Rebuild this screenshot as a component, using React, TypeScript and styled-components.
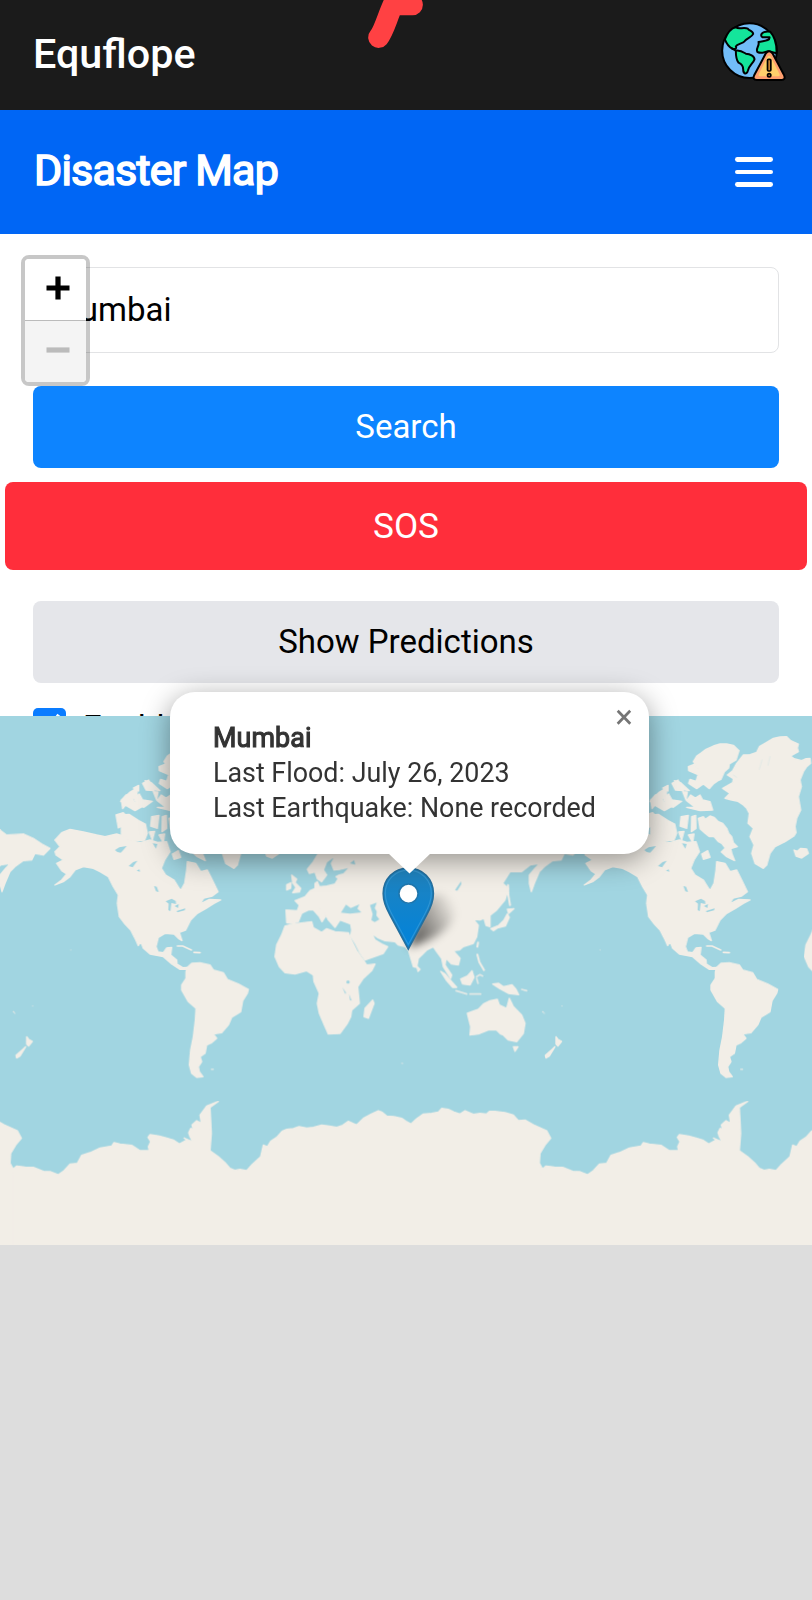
import React from "react";
import styled, { createGlobalStyle } from "styled-components";

const GlobalStyle = createGlobalStyle`
  * { box-sizing: border-box; }
  body { margin: 0; background: #ddd; font-family: Roboto, "Liberation Sans", sans-serif; }
  button, input { font: inherit; }
`;

const Page = styled.div`
  position: relative;
  width: 812px;
  height: 1600px;
  overflow: hidden;
  display: flex;
  flex-direction: column;
  background: #ddd;
`;

const AppBar = styled.header`
  position: relative;
  height: 110px;
  flex: none;
  display: flex;
  justify-content: space-between;
  align-items: flex-start;
  padding: 21px 25px 0 33px;
  background: #1b1b1b;
`;

const AppName = styled.div`
  color: #fff;
  font-size: 41.3px;
  font-weight: 500;
  line-height: 67px;
`;

const PenMark = styled.svg`
  position: absolute;
  left: 360px;
  top: 0;
`;

const TitleBar = styled.div`
  height: 124px;
  flex: none;
  display: flex;
  justify-content: space-between;
  align-items: center;
  padding: 0 39px 0 33px;
  background: #0066f5;
`;

const Title = styled.h1`
  margin: 0;
  color: #fff;
  font-size: 43px;
  font-weight: 400;
  letter-spacing: -0.8px;
  -webkit-text-stroke: 1.6px #fff;
  line-height: 60px;
  padding: 0 0 5px 1px;
`;

const MenuButton = styled.button`
  display: flex;
  flex-direction: column;
  gap: 7.7px;
  padding: 0;
  border: 0;
  background: none;
`;

const MenuLine = styled.span`
  width: 38px;
  height: 4.8px;
  border-radius: 2.4px;
  background: #fff;
`;

const Controls = styled.section`
  height: 482px;
  flex: none;
  overflow: hidden;
  padding: 33px 33px 0;
  background: #fff;
  display: flex;
  flex-direction: column;
  font-size: 33px;
`;

const SearchInput = styled.input`
  height: 86px;
  flex: none;
  padding: 0 17px 2px;
  border: 1px solid #e2e3e5;
  border-radius: 8px;
  color: #000;
  background: #fff;
  outline: none;
`;

const ActionButton = styled.button<{ $bg: string; $fg: string; $top: number; $height: number; $bleed?: number; $size?: number }>`
  height: ${(p) => p.$height}px;
  flex: none;
  margin: ${(p) => p.$top}px -${(p) => p.$bleed ?? 0}px 0;
  padding: 0 0 ${(p) => (p.$size ? 0 : 2)}px;
  border: 0;
  border-radius: 8px;
  background: ${(p) => p.$bg};
  color: ${(p) => p.$fg};
  font-size: ${(p) => p.$size ?? 33}px;
`;

const CheckRow = styled.label`
  margin-top: 25px;
  display: flex;
  align-items: flex-start;
  gap: 17px;
  line-height: 40px;
  color: #000;
`;

const CheckBox = styled.span`
  width: 33px;
  height: 33px;
  border-radius: 5px;
  background: #0a7cff;
`;

const MapView = styled.section`
  position: relative;
  height: 529px;
  flex: none;
  background: #a1d5e1;
`;

const MapDrawing = styled.svg`
  display: block;
  width: 812px;
  height: 529px;
`;

const ZoomControl = styled.div`
  position: absolute;
  left: 21px;
  top: 255px;
  width: 69px;
  height: 131px;
  display: flex;
  flex-direction: column;
  border: 4px solid rgba(0, 0, 0, 0.22);
  border-radius: 8px;
  background-clip: padding-box;
`;

const ZoomButton = styled.button<{ $off?: boolean }>`
  flex: 1;
  display: flex;
  align-items: center;
  justify-content: center;
  padding: 0 0 4px 4px;
  border: 0;
  border-bottom: ${(p) => (p.$off ? "0" : "1px solid #bbb")};
  border-radius: ${(p) => (p.$off ? "0 0 4px 4px" : "4px 4px 0 0")};
  background: ${(p) => (p.$off ? "#f4f4f4" : "#fff")};
  color: ${(p) => (p.$off ? "#bbb" : "#000")};
`;

const Marker = styled.svg`
  position: absolute;
  left: 382px;
  top: 867px;
  overflow: visible;
`;

const Popup = styled.div`
  position: absolute;
  left: 170px;
  top: 692px;
  width: 479px;
  height: 161.5px;
  padding: 29px 0 0 43px;
  border-radius: 25px;
  background: #fff;
  box-shadow: 0 6px 29px rgba(0, 0, 0, 0.4);
  color: #333;
  font-size: 26.85px;
  line-height: 35px;
  white-space: nowrap;
`;

const PlaceName = styled.div`
  -webkit-text-stroke: 1.1px #333;
  letter-spacing: 0.1px;
`;

const PopupTip = styled.div`
  position: absolute;
  left: 218px;
  top: 161px;
  width: 43px;
  height: 20.5px;
  background: #fff;
  clip-path: polygon(0 0, 100% 0, 50% 100%);
`;

const PopupClose = styled.button`
  position: absolute;
  right: 8px;
  top: 8px;
  width: 34px;
  height: 34px;
  padding: 0;
  border: 0;
  background: none;
  color: #757575;
  font-size: 33px;
  line-height: 34px;
  text-align: center;
`;

const GlobeAlert = () => (
  <svg width="67" height="61" viewBox="243 63 200 183" strokeLinejoin="round" strokeLinecap="round">
    <circle cx="331" cy="152" r="82" fill="#72bdf8" stroke="#000" strokeWidth="6" />
    <g fill="#14e59b" stroke="#000" strokeWidth="6">
      <path d="M257 118C266 96 278 84 290 82C300 90 312 80 326 86C330 93 342 92 342 102C338 112 322 114 316 124C310 131 294 131 290 139C294 146 286 150 278 145C268 140 262 130 257 118Z" />
      <path d="M290 152C304 150 312 156 320 161C332 162 346 168 346 178C342 190 330 196 326 212C322 226 312 222 312 208C312 198 308 192 298 188C292 180 290 164 290 152Z" />
      <path d="M393 95C380 92 366 98 366 106C366 116 380 110 391 112C392 124 374 122 358 126C362 136 348 148 355 156C368 162 376 156 388 154L412 160C413 134 408 112 393 95Z" />
    </g>
    <path d="M278 145L290 152" stroke="#000" strokeWidth="6" />
    <path d="M380 160Q390 148 400 160L435 226Q440 239 427 240H353Q339 239 345 226Z" fill="#ff9f6e" stroke="#000" strokeWidth="6" />
    <path d="M385 170Q390 164 395 170L421 222Q424 229 417 229H363Q356 229 359 222Z" fill="#ffd06b" />
    <rect x="385" y="178" width="10" height="35" rx="3" fill="#c98232" stroke="#000" strokeWidth="5" />
    <circle cx="390" cy="226" r="5" fill="#c98232" stroke="#000" strokeWidth="5" />
  </svg>
);

const WORLD_WIDTH = 1588;

const World = () => (
  <g id="world" fill="#f2eee7" stroke="#f2eee7" strokeWidth="4" strokeLinejoin="round" strokeLinecap="round">
    {/* North America */}
    <path d="M165 455L180 440 165 420 185 398 210 388 250 396 290 405 315 410 350 402 375 410 390 422 420 428 450 420 472 427 500 425 510 455 494 480 484 505 497 525 522 540 542 572 554 550 560 510 562 485 587 490 602 515 622 510 637 540 654 575 637 588 612 594 600 612 628 598 662 600 642 610 617 626 592 640 572 660 557 690 538 697 546 722 535 715 522 702 495 700 475 712 468 740 474 756 490 758 500 744 515 742 512 765 530 780 531 792 548 803 562 802 560 808 540 808 515 792 490 770 450 762 430 745 422 725 415 737 405 715 392 690 375 672 358 650 352 610 355 585 340 560 325 530 300 515 280 505 250 500 225 510 210 530 190 545 165 555 185 540 200 522 185 512 170 490 190 480 168 465Z" />
    <g fill="#a1d5e1" stroke="none">
      <path d="M345 450L358 442 380 438 370 450 362 458 352 456ZM386 498L400 486 412 482 398 502ZM462 558L470 560 476 576 468 574ZM497 604L515 596 527 603 528 612 514 609 511 634 505 630 506 611ZM524 618L536 612 534 624ZM530 633L556 625 554 631 532 637Z" />
      <path d="M458 430L472 432 468 446ZM410 512L418 508 420 515Z" />
    </g>
    {/* Caribbean */}
    <path d="M532 738L548 738 574 750M582 757L600 758" fill="none" strokeWidth="5" />
    {/* Arctic islands, Greenland and Iceland */}
    <path d="M348 345L370 338 388 358 375 372 355 384ZM362 304L378 285 396 290 402 306 430 318 405 332 380 318ZM400 264L416 256 416 273ZM435 242L454 248 480 272 454 268Z" />
    <g transform="translate(32 0)">
      <path d="M460 185L470 168 482 160 498 148 520 138 540 132 560 132 580 136 597 152 588 180 568 192 566 204 553 215 543 238 534 242 520 252 508 266 490 252 470 266 446 250 450 238 468 244 474 224 446 212 445 200 462 193 478 212Z" />
      <path d="M440 322L465 322 440 302 452 285 466 294 480 285 488 300 510 305 518 330 480 332ZM332 300L356 278 382 262 378 286 354 304 336 326ZM370 295L386 282 396 300 425 304 400 322 378 314ZM396 250L414 240 430 272 406 270ZM428 275L442 276 438 300ZM332 345L355 343 384 362 404 372 410 400 402 420 362 424 332 404ZM423 350L445 346 440 385 420 378ZM455 350L467 346 468 385 454 395ZM416 396L432 394 425 420ZM445 405L462 402 458 428ZM475 355L490 350 496 358 510 348 522 352 535 365 548 370 560 385 566 400 575 410 580 428 592 440 572 446 576 462 584 482 560 470 544 456 556 444 545 430 534 424 522 410 508 410 495 400 480 386ZM485 462L503 452 510 472 490 478Z" />
      <path d="M548 265L578 248 580 236 562 225 578 212 590 190 610 165 630 164 650 157 658 140 675 130 700 115 720 111 740 110 752 122 775 132 772 144 775 155 752 168 762 176 785 182 798 176 810 175 812 190 800 200 790 215 780 240 784 260 775 290 782 330 770 355 765 380 768 398 762 408 735 425 705 440 690 460 680 495 670 505 645 490 635 460 642 435 630 410 640 385 624 370 628 340 620 325 610 315 594 304 575 300 555 295 570 280ZM762 450L772 454 782 445 800 447 805 460 785 474 768 468Z" />
    </g>
    <path d="M612 225L622 232M698 180L690 208M722 170L716 196" stroke="#dde8e5" strokeWidth="2" />
    {/* South America, New Zealand and Antarctica */}
    <g transform="translate(0 720)">
      <path d="M562 82L575 70 600 68 630 75 640 90 670 98 682 118 715 132 745 148 742 160 728 182 722 215 695 232 685 255 665 278 640 282 650 295 635 308 620 315 615 340 600 350 605 365 595 380 598 395 609 410 590 412 575 400 568 375 572 330 580 290 586 240 588 205 565 185 545 150 545 135 558 115 558 95Z" />
      <path d="M80 290L86 298 97 304 86 318 80 312ZM77 320L60 348 50 354 48 346 66 330Z" />
      <path d="M634 388h6" strokeOpacity="0.7" />
      <path d="M212 30h1M97 198h2M40 215h1" strokeOpacity="0.4" />
    </g>
    <path d="M38 1408L50 1398 75 1401 100 1402 130 1414 152 1415 175 1424 192 1412 210 1392 232 1390 245 1366 270 1358 300 1344 335 1338 342 1328 360 1332 395 1336 420 1352 448 1352 445 1340 452 1325 444 1312 450 1304 478 1308 500 1314 520 1320 538 1332 560 1320 552 1314 578 1325 570 1310 566 1298 572 1285 580 1290 576 1275 590 1262 604 1270 600 1245 620 1218 655 1204 630 1222 632 1260 634 1300 630 1352 655 1370 675 1388 690 1405 704 1411 720 1408 740 1412 756 1394 782 1370 790 1335 802 1340 812 1324 830 1312 846 1294 860 1288 880 1286 897 1280 920 1284 940 1282 965 1275 988 1278 1010 1282 1028 1276 1045 1264 1070 1275 1090 1255 1114 1242 1135 1232 1145 1236 1160 1248 1182 1250 1205 1255 1218 1264 1233 1272 1250 1256 1270 1242 1295 1240 1315 1236 1325 1225 1345 1228 1362 1236 1380 1242 1395 1232 1420 1243 1440 1240 1460 1242 1468 1234 1485 1234 1515 1238 1540 1245 1555 1262 1575 1260 1600 1274 1640 1292 1652 1315 1635 1335 1620 1360 1618 1390 1628 1408V1660H38Z" />
    {/* Africa, Europe, Asia and Australia */}
    <g transform="translate(780 450)">
      <path d="M75 228L100 222 130 218 155 215 160 233 185 247 200 236 225 245 265 248 275 272 290 302 310 330 320 345 345 342 335 362 310 385 293 410 298 460 275 480 272 500 262 520 240 550 205 552 195 530 178 490 172 460 178 430 162 395 160 375 140 362 105 372 75 368 58 350 45 320 50 285 65 255ZM315 475L338 450 342 460 325 505 312 500Z" />
      <path d="M80 218L78 180 112 182 118 165 105 152 135 140 150 122 165 115 165 100 172 95 178 110 200 108 225 102 235 85 228 80 250 68 280 30 300 -60H808L828 -45 878 -48 908 -35 933 -18 958 -5 938 15 913 10 903 30 878 32 853 50 838 65 823 100 814 125 808 100 808 75 825 55 840 40 810 45 785 65 750 65 728 100 745 115 735 150 710 180 690 196 690 230 678 226 672 205 660 210 640 208 655 226 650 260 640 280 610 290 598 300 580 302 600 325 595 345 575 342 558 325 555 345 575 375 572 385 550 350 545 325 530 305 520 290 500 300 475 325 470 352 460 350 445 300 435 290 415 285 405 275 375 272 355 264 335 250 345 270 365 282 383 290 370 310 315 330 300 308 287 282 272 258 275 240 272 222 240 210 225 232 205 210 198 195 178 176 196 200 186 215 178 200 160 180 145 180 125 190 115 215 95 220Z" />
      <path d="M142 58L160 35 175 10 185 -40 300 -60 290 40 255 57 222 60 214 40 228 15 200 35 190 60 200 75 185 95 172 86 165 66 148 70ZM95 75L110 87 105 98 122 115 118 126 98 128 108 112 98 98ZM80 104L93 98 92 115 80 120Z" />
      <g fill="#a1d5e1" stroke="none">
        <path d="M243 188L258 164 272 174 298 163 292 176 304 187 270 191ZM330 165L350 158 344 174 350 184 349 197 358 208 344 216 334 210 338 192ZM585 120L603 94 604 102 592 122ZM225 75L250 70 264 54 240 60ZM270 40L282 30 286 44Z" />
      </g>
      <path d="M742 178L762 176 746 190ZM742 192L748 202 736 228 712 234 700 242 692 236 716 226 732 210Z" />
      <path d="M744 105L745 135 750 165M654 278L652 290M652 314L658 336 672 360" fill="none" strokeWidth="6" />
      <path d="M470 348L480 358 474 364ZM542 364L555 372 590 412 578 412 560 392ZM602 387L622 378 636 362 642 382 630 405 608 402ZM698 402L716 400 730 410 756 404 768 418 776 434 745 430 720 416ZM760 590L774 590 765 604Z" />
      <path d="M588 422L620 432M630 432L662 432M650 380L660 374 668 378M650 385L654 400M785 418L800 422" fill="none" strokeWidth="5" strokeOpacity="0.8" />
      <path d="M848 485L853 490M425 640h3" strokeOpacity="0.5" />
      <path d="M622 490L655 478 670 462 690 452 712 448 718 465 740 475 748 445 760 470 785 495 795 520 790 550 770 575 745 570 730 555 722 552 710 540 685 540 655 552 630 555 632 530Z" />
      <g fill="#a1d5e1" stroke="none">
        <circle cx="264" cy="396" r="5" />
        <path d="M247 412L258 428 256 432ZM267 432L275 452 270 450Z" />
      </g>
    </g>
  </g>
);

export default function App() {
  return (
    <Page>
      <GlobalStyle />
      <AppBar>
        <AppName>Equflope</AppName>
        <PenMark width="70" height="52">
          <path d="M18.6 37.5C24 31 27 18 33 4.8H52.5" fill="none" stroke="#ff4143" strokeWidth="20.8" strokeLinecap="round" strokeLinejoin="round" />
        </PenMark>
        <GlobeAlert />
      </AppBar>
      <TitleBar>
        <Title>Disaster Map</Title>
        <MenuButton aria-label="Menu">
          <MenuLine />
          <MenuLine />
          <MenuLine />
        </MenuButton>
      </TitleBar>
      <Controls>
        <SearchInput defaultValue="Mumbai" />
        <ActionButton $bg="#0d84ff" $fg="#fff" $top={33} $height={82}>Search</ActionButton>
        <ActionButton $bg="#ff2e3b" $fg="#fff" $top={14} $height={88} $bleed={28} $size={35.2}>SOS</ActionButton>
        <ActionButton $bg="#e5e6ea" $fg="#000" $top={31} $height={82}>Show Predictions</ActionButton>
        <CheckRow>
          <CheckBox>
            <svg width="33" height="33" viewBox="0 0 33 33">
              <path d="M8 17L14 23L26 7" fill="none" stroke="#fff" strokeWidth="4" />
            </svg>
          </CheckBox>
          Enable
        </CheckRow>
      </Controls>
      <MapView>
        <MapDrawing viewBox="0 48 2436 1587">
          <filter id="tile" x="-5%" y="-5%" width="110%" height="110%">
            <feGaussianBlur stdDeviation="1.5" />
          </filter>
          <g filter="url(#tile)">
            <use href="#world" x={-WORLD_WIDTH} />
            <World />
            <use href="#world" x={WORLD_WIDTH} />
          </g>
        </MapDrawing>
      </MapView>
      <ZoomControl>
        <ZoomButton aria-label="Zoom in">
          <svg width="24" height="24">
            <path d="M0.5 12H23.5M12 0.5V23.5" stroke="currentColor" strokeWidth="5.2" />
          </svg>
        </ZoomButton>
        <ZoomButton $off aria-label="Zoom out">
          <svg width="24" height="24">
            <path d="M0.5 12H23.5" stroke="currentColor" strokeWidth="5.2" />
          </svg>
        </ZoomButton>
      </ZoomControl>
      <Marker width="53" height="84">
        <defs>
          <linearGradient id="pin" x1="0" y1="0" x2="0" y2="1">
            <stop offset="0" stopColor="#2183bd" />
            <stop offset="1" stopColor="#0083dc" />
          </linearGradient>
          <linearGradient id="shade" x1="0" y1="0.8" x2="1" y2="0.2">
            <stop offset="0" stopColor="#000" stopOpacity="0.65" />
            <stop offset="0.5" stopColor="#000" stopOpacity="0.33" />
            <stop offset="1" stopColor="#000" stopOpacity="0" />
          </linearGradient>
          <filter id="soft" x="-40%" y="-40%" width="180%" height="180%">
            <feGaussianBlur stdDeviation="4" />
          </filter>
        </defs>
        <path d="M27 80C32 62 38 40 50 28C70 22 80 44 66 60C56 70 42 76 27 80Z" fill="url(#shade)" filter="url(#soft)" />
        <path d="M26.3 1C12 1 1.2 12 1.2 26.5C1.2 34 4 41 8 48L26.3 82L44.6 48C48.6 41 51.4 34 51.4 26.5C51.4 12 40.6 1 26.3 1Z" fill="url(#pin)" stroke="#246f9e" strokeWidth="1.6" />
        <path d="M26.3 3.2C13 3.2 3.3 13.4 3.3 26.5C3.3 33.5 6 40 9.8 47L26.3 77.5L42.8 47C46.6 40 49.3 33.5 49.3 26.5C49.3 13.4 39.6 3.2 26.3 3.2Z" fill="none" stroke="#4ba5dc" strokeOpacity="0.5" strokeWidth="1.2" />
        <circle cx="26.5" cy="26.6" r="9.6" fill="#fff" stroke="#1f76ad" strokeWidth="1.6" />
      </Marker>
      <Popup>
        <PlaceName>Mumbai</PlaceName>
        Last Flood: July 26, 2023
        <br />
        Last Earthquake: None recorded
        <PopupTip />
        <PopupClose>×</PopupClose>
      </Popup>
    </Page>
  );
}
